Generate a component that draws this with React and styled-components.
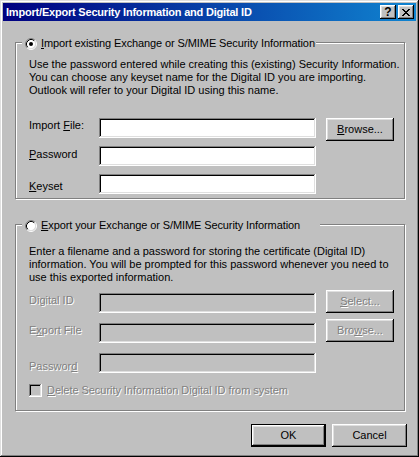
import React from 'react';
import styled, { createGlobalStyle } from 'styled-components';

// classic win9x/2000 palette
const FACE = '#c0c0c0';
const LIGHT = '#dfdfdf';
const SHADOW = '#808080';

const raised = `box-shadow: inset -1px -1px #000, inset 1px 1px #fff, inset -2px -2px ${SHADOW}, inset 2px 2px ${LIGHT};`;
const sunken = `box-shadow: inset -1px -1px #fff, inset 1px 1px ${SHADOW}, inset -2px -2px ${LIGHT}, inset 2px 2px #000;`;

const GlobalStyle = createGlobalStyle`
  html, body {
    margin: 0;
    padding: 0;
    background: ${FACE};
  }
`;

const Window = styled.div`
  width: 419px;
  height: 457px;
  box-sizing: border-box;
  padding: 3px;
  display: flex;
  flex-direction: column;
  background: ${FACE};
  box-shadow: inset -1px -1px #000, inset 1px 1px ${LIGHT}, inset -2px -2px ${SHADOW}, inset 2px 2px #fff;
  font-family: 'Liberation Sans', Arial, sans-serif;
  font-size: 11px;
  line-height: 13px;
  color: #000;
`;

const TitleBar = styled.div`
  height: 18px;
  display: flex;
  align-items: center;
  padding: 0 2px 0 3px;
  background: linear-gradient(to right, #000080, #1084d0);
`;

const Title = styled.div`
  flex: 1;
  color: #fff;
  font-weight: bold;
  letter-spacing: -0.2px;
  white-space: nowrap;
`;

const CaptionButton = styled.div`
  width: 16px;
  height: 14px;
  margin-left: ${p => p.$gap || 0}px;
  display: flex;
  align-items: center;
  justify-content: center;
  background: ${FACE};
  ${raised}
  font-weight: bold;
  font-size: 12px;
  line-height: 14px;
`;

const Body = styled.div`
  display: flex;
  flex-direction: column;
  padding: 21px 11px 0 12px;
`;

const Group = styled.div`
  position: relative;
  margin-top: ${p => p.$mt || 0}px;
  padding: ${p => p.$top}px 8px ${p => p.$bottom}px 13px;
  border: 1px solid ${SHADOW};
  box-shadow: 1px 1px 0 #fff, inset 1px 1px 0 #fff;
`;

const Legend = styled.div`
  position: absolute;
  top: -6px;
  left: 6px;
  width: ${p => p.$w}px;
  height: 13px;
  box-sizing: border-box;
  padding-left: 3px;
  display: flex;
  align-items: center;
  gap: 4px;
  background: ${FACE};
  white-space: nowrap;
  letter-spacing: -0.1px;
`;

const Desc = styled.p`
  margin: 0;
  white-space: nowrap;
`;

const FieldGrid = styled.div`
  display: grid;
  grid-template-columns: 70px 227px 68px;
  grid-auto-rows: 20px;
  row-gap: ${p => p.$gap}px;
  align-items: start;
  margin-top: ${p => p.$mt}px;
`;

const Label = styled.div`
  grid-column: 1;
  padding-top: ${p => p.$dy}px;
  white-space: nowrap;
  color: ${p => (p.$disabled ? SHADOW : '#000')};
  text-shadow: ${p => (p.$disabled ? '1px 1px 0 #fff' : 'none')};
`;

const Field = styled.div`
  grid-column: 2;
  width: 217px;
  height: 20px;
  background: ${p => (p.$disabled ? FACE : '#fff')};
  ${sunken}
`;

const Button = styled.div`
  width: ${p => p.$w || 68}px;
  height: 23px;
  box-sizing: border-box;
  margin-top: ${p => p.$dy || 0}px;
  display: flex;
  align-items: center;
  justify-content: center;
  background: ${FACE};
  ${raised}
  border: ${p => (p.$default ? '1px solid #000' : 'none')};
  color: ${p => (p.$disabled ? SHADOW : '#000')};
  text-shadow: ${p => (p.$disabled ? '1px 1px 0 #fff' : 'none')};
  white-space: nowrap;
`;

const CheckRow = styled.div`
  display: flex;
  align-items: center;
  gap: 5px;
  height: 13px;
  margin-top: 11px;
  color: ${SHADOW};
  text-shadow: 1px 1px 0 #fff;
  letter-spacing: -0.05px;
`;

const CheckBox = styled.span`
  width: 13px;
  height: 13px;
  flex: none;
  background: ${FACE};
  ${sunken}
`;

const Footer = styled.div`
  display: flex;
  justify-content: flex-end;
  gap: 6px;
  margin: 13px -2px 0 0;
`;

const Key = styled.span`
  text-decoration: underline;
`;

const RadioIcon = ({ checked }) => (
  <svg width="12" height="12" viewBox="0 0 12 12" style={{ flex: 'none' }}>
    <circle cx="6" cy="6" r="4.5" fill="#fff" />
    <path d="M2.11 9.89A5.5 5.5 0 0 1 9.89 2.11" stroke={SHADOW} fill="none" />
    <path d="M9.89 2.11A5.5 5.5 0 0 1 2.11 9.89" stroke="#fff" fill="none" />
    <path d="M2.82 9.18A4.5 4.5 0 0 1 9.18 2.82" stroke="#000" fill="none" />
    <path d="M9.18 2.82A4.5 4.5 0 0 1 2.82 9.18" stroke={LIGHT} fill="none" />
    {checked && <circle cx="6" cy="6" r="2" fill="#000" />}
  </svg>
);

const CloseIcon = () => (
  <svg width="8" height="7" viewBox="0 0 8 7" shapeRendering="crispEdges">
    {[0, 1, 2, 3, 4, 5, 6].map(i => (
      <React.Fragment key={i}>
        <rect x={i} y={i} width="2" height="1" fill="#000" />
        <rect x={6 - i} y={i} width="2" height="1" fill="#000" />
      </React.Fragment>
    ))}
  </svg>
);

export default function App() {
  return (
    <>
      <GlobalStyle />
      <Window>
        <TitleBar>
          <Title>Import/Export Security Information and Digital ID</Title>
          <CaptionButton>?</CaptionButton>
          <CaptionButton $gap={2}>
            <CloseIcon />
          </CaptionButton>
        </TitleBar>

        <Body>
          <Group $top={15} $bottom={4}>
            <Legend $w={294}>
              <RadioIcon checked />
              <span>
                <Key>I</Key>mport existing Exchange or S/MIME Security Information
              </span>
            </Legend>
            <Desc>
              Use the password entered while creating this (existing) Security Information.
              <br />
              You can choose any keyset name for the Digital ID you are importing.
              <br />
              Outlook will refer to your Digital ID using this name.
            </Desc>
            <FieldGrid $gap={8} $mt={21}>
              <Label $dy={1}>
                Import <Key>F</Key>ile:
              </Label>
              <Field />
              <Button>
                <Key>B</Key>rowse...
              </Button>
              <Label $dy={2}>
                <Key>P</Key>assword
              </Label>
              <Field />
              <Label $dy={6}>
                <Key>K</Key>eyset
              </Label>
              <Field />
            </FieldGrid>
          </Group>

          <Group $mt={25} $top={20} $bottom={13}>
            <Legend $w={298}>
              <RadioIcon />
              <span>
                <Key>E</Key>xport your Exchange or S/MIME Security Information
              </span>
            </Legend>
            <Desc>
              Enter a filename and a password for storing the certificate (Digital ID)
              <br />
              information. You will be prompted for this password whenever you need to
              <br />
              use this exported information.
            </Desc>
            <FieldGrid $gap={10} $mt={9}>
              <Label $dy={1} $disabled>
                Digital ID
              </Label>
              <Field $disabled />
              <Button $disabled $dy={-3}>
                <Key>S</Key>elect...
              </Button>
              <Label $dy={1} $disabled>
                E<Key>x</Key>port File
              </Label>
              <Field $disabled />
              <Button $disabled $dy={-4}>
                Bro<Key>w</Key>se...
              </Button>
              <Label $dy={7} $disabled>
                Passwor<Key>d</Key>
              </Label>
              <Field $disabled />
            </FieldGrid>
            <CheckRow>
              <CheckBox />
              <span>
                <Key>D</Key>elete Security Information Digital ID from system
              </span>
            </CheckRow>
          </Group>

          <Footer>
            <Button $w={75} $default>
              OK
            </Button>
            <Button $w={75}>Cancel</Button>
          </Footer>
        </Body>
      </Window>
    </>
  );
}
